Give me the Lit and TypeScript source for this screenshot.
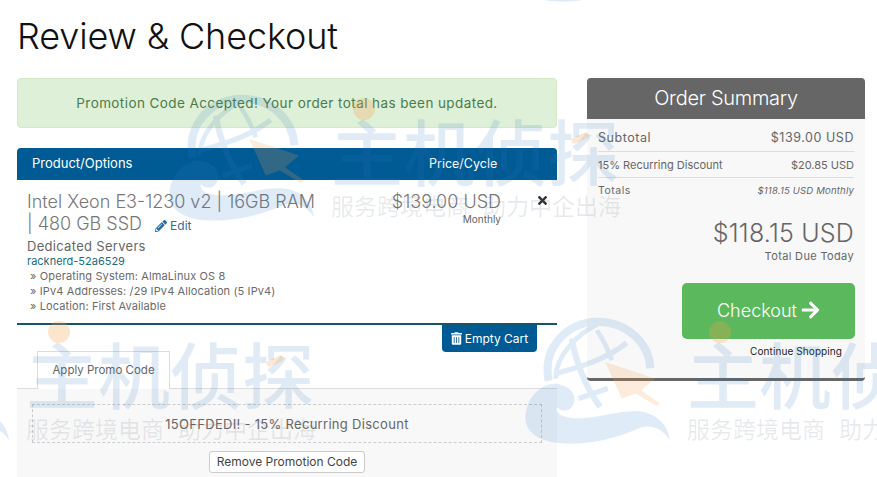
import { LitElement, html, css, svg } from "lit";
import { customElement } from "lit/decorators.js";

const logo = svg`<svg class="logo" viewBox="30 20 440 385" xmlns="http://www.w3.org/2000/svg">
  <g opacity=".15">
    <g fill="none" stroke="#2f7cc4">
      <path stroke-width="24" d="M100 212C80 110 160 32 250 34c88 2 152 64 156 140"/>
      <path stroke-width="14" d="M250 40C190 70 124 130 120 205"/>
      <path stroke-width="18" d="M170 85c10 65 40 145 85 205"/>
      <path stroke-width="16" d="M125 190c65-20 145-40 210-92"/>
      <path stroke-width="16" d="M190 265l88-30"/>
      <path stroke-width="14" d="M245 60c20 30 35 60 45 90"/>
    </g>
    <path fill="#2f7cc4" d="M30 320C35 250 90 215 130 222c40 8 60 38 40 68-15 20-40 10-45 0-5 25 25 35 65 35 70 0 150-35 210-15 40 15 60 45 65 80-25-35-55-50-95-35-70 30-150 50-230 45C75 395 30 370 30 320z"/>
  </g>
  <path fill="#f6a04d" fill-opacity=".2" d="M270 155l150 50-42 35 57 40-10 8-63-38-42 15z"/>
</svg>`;

const mark = (cls: string) => html`<div class="mark ${cls}">
  ${logo}
  <div class="mark-text">
    <span class="dot"></span><span class="dash"></span>
    <div class="big">主机侦探</div>
    <div class="sub"><span>服务跨境电商</span><span class="sub2">助力中企出海</span></div>
  </div>
</div>`;

const pencil = svg`<svg class="ic" viewBox="0 0 512 512"><path fill="currentColor" d="M497.9 142.1l-46.1 46.1c-4.7 4.7-12.3 4.7-17 0l-111-111c-4.7-4.7-4.7-12.3 0-17l46.1-46.1c18.7-18.7 49.1-18.7 67.9 0l60.1 60.1c18.8 18.7 18.8 49.1 0 67.9zM284.2 99.8L21.6 362.4.4 483.9c-2.9 16.4 11.4 30.6 27.8 27.8l121.5-21.3 262.6-262.6c4.7-4.7 4.7-12.3 0-17l-111-111c-4.8-4.7-12.4-4.7-17.1 0zM124.1 339.9c-5.5-5.5-5.5-14.3 0-19.8l154-154c5.5-5.5 14.3-5.5 19.8 0s5.5 14.3 0 19.8l-154 154c-5.5 5.5-14.3 5.5-19.8 0zM88 424h48v36.3l-64.5 11.3-31.1-31.1L51.7 376H88v48z"/></svg>`;
const times = svg`<svg class="times" viewBox="0 0 352 512"><path fill="currentColor" d="M242.72 256l100.07-100.07c12.28-12.28 12.28-32.19 0-44.48l-22.24-22.24c-12.28-12.28-32.19-12.28-44.48 0L176 189.28 75.93 89.21c-12.28-12.28-32.19-12.28-44.48 0L9.21 111.45c-12.28 12.28-12.28 32.19 0 44.48L109.28 256 9.21 356.07c-12.28 12.28-12.28 32.19 0 44.48l22.24 22.24c12.28 12.28 32.2 12.28 44.48 0L176 322.72l100.07 100.07c12.28 12.28 32.2 12.28 44.48 0l22.24-22.24c12.28-12.28 12.28-32.19 0-44.48L242.72 256z"/></svg>`;
const trash = svg`<svg class="trash" viewBox="0 0 448 512"><path fill="currentColor" d="M32 464a48 48 0 0 0 48 48h288a48 48 0 0 0 48-48V128H32zm272-256a16 16 0 0 1 32 0v224a16 16 0 0 1-32 0zm-96 0a16 16 0 0 1 32 0v224a16 16 0 0 1-32 0zm-96 0a16 16 0 0 1 32 0v224a16 16 0 0 1-32 0zM432 32H312l-9.4-18.7A24 24 0 0 0 281.1 0H166.8a23.72 23.72 0 0 0-21.4 13.3L136 32H16A16 16 0 0 0 0 48v32a16 16 0 0 0 16 16h416a16 16 0 0 0 16-16V48a16 16 0 0 0-16-16z"/></svg>`;
const arrow = svg`<svg class="arrow" viewBox="0 0 448 512"><path fill="currentColor" d="M190.5 66.9l22.2-22.2c9.4-9.4 24.6-9.4 33.9 0L441 239c9.4 9.4 9.4 24.6 0 33.9L246.6 467.3c-9.4 9.4-24.6 9.4-33.9 0l-22.2-22.2c-9.5-9.5-9.3-25 .4-34.3L311.4 296H24c-13.3 0-24-10.7-24-24v-32c0-13.3 10.7-24 24-24h287.4L190.9 101.2c-9.8-9.3-10-24.8-.4-34.3z"/></svg>`;

@customElement("app-root")
export class AppRoot extends LitElement {
  static styles = css`
    :host {
      display: block;
      position: relative;
      width: 877px;
      height: 477px;
      overflow: hidden;
      background: #fff;
      font-family: "Inter", "Noto Sans", sans-serif;
      color: #666;
    }
    .page { padding: 0 12px 0 17px; }
    h1 {
      margin: 0;
      height: 78px;
      padding: 15px 0 0 0;
      box-sizing: border-box;
      font: 300 36px/42px "Inter", sans-serif;
      color: #111;
      letter-spacing: -0.13px;
    }
    .cols { display: grid; grid-template-columns: 540px 278px; gap: 30px; align-items: start; }
    .alert {
      height: 50px;
      box-sizing: border-box;
      display: flex;
      align-items: center;
      justify-content: center;
      background: #dff0d8;
      border: 1px solid #d6e9c6;
      border-radius: 4px;
      color: #4a7c4b;
      font-size: 13.5px;
      letter-spacing: 0.41px;
      margin-bottom: 20px;
    }
    .thead {
      height: 32px;
      box-sizing: border-box;
      background: #005a94;
      border-radius: 4px 4px 0 0;
      color: #fff;
      font-size: 13px;
      display: grid;
      grid-template-columns: 397px 1fr;
      align-items: center;
      padding: 0 0 2px 15px;
    }
    .pc { font-size: 12.5px; }
    .item {
      height: 145px;
      box-sizing: border-box;
      border-bottom: 2px solid #14566b;
      display: grid;
      grid-template-columns: 364px 110px 1fr;
      padding: 11px 0 0 10px;
    }
    .name { font-size: 18px; line-height: 22px; color: #777; font-weight: 300; max-width: 295px; }
    .edit { font-size: 12px; color: #2a6f9e; margin-left: 8px; display: inline-flex; align-items: center; gap: 3px; font-weight: 400; position: relative; top: 2px; }
    .ic { width: 12px; height: 12px; }
    .group { font-size: 13px; margin-top: 3px; line-height: 16px; letter-spacing: 0.3px; }
    .code { font-size: 11px; line-height: 15px; color: #1c6b7c; }
    .opts { font-size: 11px; line-height: 15px; padding-left: 3px; color: #6a6a6a; letter-spacing: 0.12px; }
    .price { font-size: 18px; line-height: 22px; text-align: right; color: #777; font-weight: 300; white-space: nowrap; }
    .cycle { font-size: 10px; line-height: 14px; text-align: right; margin-top: -1px; font-weight: 400; }
    .remove { display: flex; justify-content: flex-end; padding: 3px 10px 0 0; color: #333; }
    .times { width: 9px; height: 13px; }
    .actions { display: flex; justify-content: flex-end; padding-right: 20px; margin-bottom: -1px; }
    .empty {
      height: 27px;
      width: 95px;
      box-sizing: border-box;
      background: #005a94;
      color: #fff;
      border-radius: 0 0 4px 4px;
      font-size: 12px;
      display: flex;
      align-items: center;
      justify-content: center;
      gap: 3px;
    }
    .trash { width: 11px; height: 13px; }
    .tabs { height: 37px; border-bottom: 1px solid #ddd; padding-left: 20px; display: flex; }
    .tab {
      width: 133px;
      height: 38px;
      box-sizing: border-box;
      border: 1px solid #ddd;
      border-bottom: 0;
      background: #fff;
      font-size: 11.5px;
      display: flex;
      align-items: center;
      justify-content: center;
      padding-bottom: 2px;
    }
    .panel { background: #f8f8f8; height: 88px; padding: 15px 15px 0; box-sizing: border-box; }
    .promo {
      height: 39px;
      box-sizing: border-box;
      border: 1px dashed #ccc;
      display: flex;
      align-items: center;
      justify-content: center;
      font-size: 13px;
      letter-spacing: 0.3px;
    }
    .rm-row { display: flex; justify-content: center; margin-top: 8px; }
    .rm {
      width: 156px;
      height: 22px;
      box-sizing: border-box;
      border: 1px solid #ccc;
      border-radius: 3px;
      background: #fff;
      color: #444;
      font-size: 12px;
      display: flex;
      align-items: center;
      justify-content: center;
      padding-bottom: 2px;
    }
    .sum { background: #f8f8f8; border-bottom: 3px solid #666; border-radius: 4px; height: 303px; box-sizing: border-box; }
    .sum-head {
      height: 41px;
      box-sizing: border-box;
      padding-bottom: 1px;
      background: #666;
      color: #fff;
      border-radius: 4px 4px 0 0;
      display: flex;
      align-items: center;
      justify-content: center;
      font-size: 20px;
      font-weight: 300;
      letter-spacing: -0.3px;
    }
    .sum-body { padding: 5px 11px 0; }
    .row { display: flex; justify-content: space-between; align-items: center; border-bottom: 1px solid #ddd; }
    .r1 { height: 27px; font-size: 12.5px; letter-spacing: 0.55px; }
    .r2 { height: 25px; font-size: 11px; }
    .r3 { height: 24px; border: 0; font-size: 10.5px; letter-spacing: 0.5px; }
    .r3 i { font-size: 9.5px; letter-spacing: 0.2px; }
    .total { text-align: right; font-size: 25px; font-weight: 300; line-height: 30px; margin-top: 16px; letter-spacing: 0.2px; }
    .due { text-align: right; font-size: 11px; line-height: 16px; letter-spacing: 0.35px; }
    .cta-wrap { display: flex; justify-content: flex-end; margin: 19px -1px 0 0; }
    .cta {
      width: 173px;
      height: 56px;
      box-sizing: border-box;
      padding-bottom: 2px;
      background: #5cb85c;
      border-radius: 5px;
      color: #fff;
      font-size: 18px;
      font-weight: 300;
      display: flex;
      align-items: center;
      justify-content: center;
      gap: 4px;
    }
    .arrow { width: 19px; height: 20px; }
    .cont { font-size: 10px; letter-spacing: 0.1px; line-height: 14px; margin-top: 5px; color: #222; padding-left: 152px; white-space: nowrap; }
    .marks { position: absolute; inset: 0; pointer-events: none; }
    .mark { position: absolute; display: flex; align-items: flex-start; }
    .logo { width: 147px; height: 128px; flex: none; }
    .mark-text { position: relative; margin-left: 15px; margin-top: 19px; font-family: "Noto Sans CJK SC", sans-serif; }
    .big { font-size: 72px; line-height: 72px; color: rgba(47,124,196,.15); font-weight: 500; white-space: nowrap; }
    .sub { font-size: 23px; line-height: 30px; color: rgba(60,80,100,.12); white-space: nowrap; margin-top: 5px; }
    .sub2 { margin-left: 14px; }
    .dot { position: absolute; left: 22px; top: -15px; width: 22px; height: 22px; border-radius: 50%; background: rgba(246,160,77,.28); }
    .dash { position: absolute; left: 240px; top: 22px; width: 18px; height: 6px; border-radius: 3px; background: rgba(246,160,77,.25); transform: rotate(-25deg); }
    .m1 { left: 169px; top: 94px; }
    .m2 { left: -136px; top: 317px; }
    .m3 { left: 525px; top: 317px; }
    .m0 { left: 517px; top: -125px; }
  `;

  render() {
    return html`
      <div class="page">
        <h1>Review &amp; Checkout</h1>
        <div class="cols">
          <div>
            <div class="alert">Promotion Code Accepted! Your order total has been updated.</div>
            <div class="thead"><span>Product/Options</span><span class="pc">Price/Cycle</span></div>
            <div class="item">
              <div>
                <div class="name">Intel Xeon E3-1230 v2 | 16GB RAM | 480 GB SSD <span class="edit">${pencil}Edit</span></div>
                <div class="group">Dedicated Servers</div>
                <div class="code">racknerd-52a6529</div>
                <div class="opts">» Operating System: AlmaLinux OS 8</div>
                <div class="opts">» IPv4 Addresses: /29 IPv4 Allocation (5 IPv4)</div>
                <div class="opts">» Location: First Available</div>
              </div>
              <div>
                <div class="price">$139.00 USD</div>
                <div class="cycle">Monthly</div>
              </div>
              <div class="remove">${times}</div>
            </div>
            <div class="actions"><div class="empty">${trash}Empty Cart</div></div>
            <div class="tabs"><div class="tab">Apply Promo Code</div></div>
            <div class="panel">
              <div class="promo">15OFFDEDI! - 15% Recurring Discount</div>
              <div class="rm-row"><div class="rm">Remove Promotion Code</div></div>
            </div>
          </div>
          <div class="sum">
            <div class="sum-head">Order Summary</div>
            <div class="sum-body">
              <div class="row r1"><span>Subtotal</span><span>$139.00 USD</span></div>
              <div class="row r2"><span>15% Recurring Discount</span><span>$20.85 USD</span></div>
              <div class="row r3"><span>Totals</span><i>$118.15 USD Monthly</i></div>
              <div class="total">$118.15 USD</div>
              <div class="due">Total Due Today</div>
              <div class="cta-wrap"><div class="cta">Checkout ${arrow}</div></div>
              <div class="cont">Continue Shopping</div>
            </div>
          </div>
        </div>
      </div>
      <div class="marks">
        <div class="mark m0">${logo}</div>
        ${mark("m1")}${mark("m2")}${mark("m3")}
      </div>
    `;
  }
}
